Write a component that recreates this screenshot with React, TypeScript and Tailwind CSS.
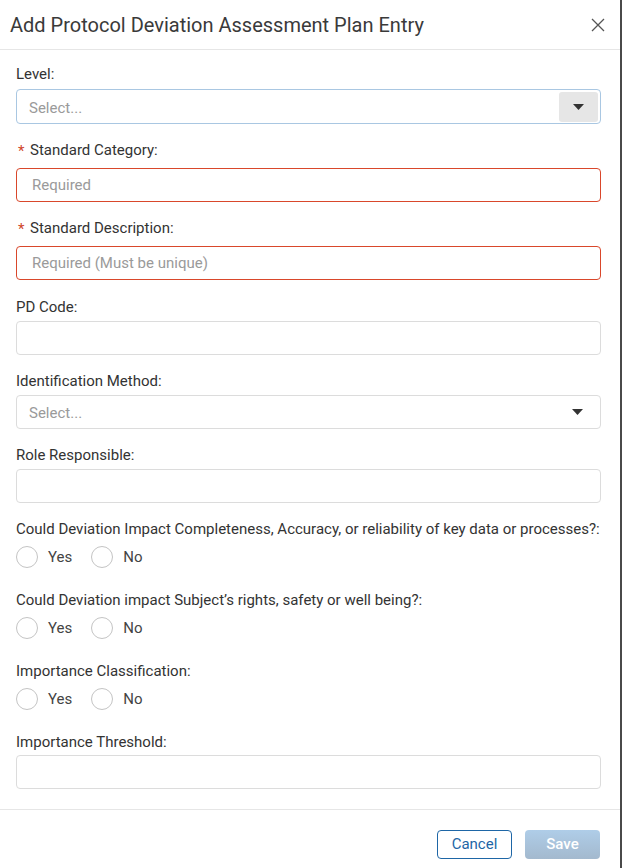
import React from "react";

interface RadioProps {
  name: string;
}

const Caret: React.FC = () => (
  <svg width="11" height="6" viewBox="0 0 11 6" className="block">
    <path d="M0 0 L11 0 L5.5 6 Z" fill="#333" />
  </svg>
);

const Label: React.FC<{ text: string; required?: boolean; className?: string }> = ({ text, required, className }) => (
  <div className={`flex items-center h-5 text-[15px] text-[#333] ${className ?? ""}`}>
    {required && <span className="text-[#d0442a] text-[15px] w-[14px] pl-[2px] leading-none mt-[3px]">*</span>}
    <span>{text}</span>
  </div>
);

const TextInput: React.FC<{ placeholder?: string; error?: boolean; className?: string }> = ({ placeholder, error, className }) => (
  <input
    type="text"
    placeholder={placeholder}
    className={`block w-full h-[34px] rounded-[4px] border bg-white pl-[15px] pr-4 text-[15px] text-[#333] placeholder:text-[#9a9a9a] outline-none ${
      error ? "border-[#d9472b]" : "border-[#dcdcdc]"
    } ${className ?? ""}`}
  />
);

const RadioRow: React.FC<RadioProps> = ({ name }) => (
  <div className="flex items-center h-6 text-[15px] text-[#444]">
    {["Yes", "No"].map((opt) => (
      <label key={opt} className="flex items-center mr-[19px]">
        <span className="w-[22px] h-[22px] rounded-full border border-[#c4c4c4] bg-white" />
        <span className="ml-[10px]">{opt}</span>
        <input type="radio" name={name} className="hidden" />
      </label>
    ))}
  </div>
);

export default function App() {
  return (
    <div className="w-[622px] h-[868px] bg-white border-r-2 border-[#4a4a4a] flex flex-col font-['Roboto',sans-serif]">
      {/* Header */}
      <header className="h-[50px] shrink-0 border-b border-[#e6e6e6] flex items-center justify-between pl-[10px] pr-[14px]">
        <h1 className="text-[20px] text-[#3a3a3a] font-normal">Add Protocol Deviation Assessment Plan Entry</h1>
        <button aria-label="Close" className="w-4 h-4 flex items-center justify-center">
          <svg width="14" height="14" viewBox="0 0 14 14">
            <path d="M1 1 L13 13 M13 1 L1 13" stroke="#555" strokeWidth="1.3" />
          </svg>
        </button>
      </header>

      {/* Body */}
      <section className="flex-1 pl-4 pr-[19px] pt-[14px]">
        <Label text="Level:" />
        <div className="mt-[5px] h-[35px] rounded-[4px] border border-[#a9c7e2] flex items-center justify-between pl-3 pr-[2px]">
          <span className="text-[15px] text-[#9a9a9a] pt-[3px]">Select...</span>
          <span className="w-[39px] h-[30px] rounded-[3px] bg-[#e6e6e6] flex items-center justify-center">
            <Caret />
          </span>
        </div>

        <Label text="Standard Category:" required className="mt-4" />
        <TextInput placeholder="Required" error className="mt-2" />

        <Label text="Standard Description:" required className="mt-4" />
        <TextInput placeholder="Required (Must be unique)" error className="mt-2" />

        <Label text="PD Code:" className="mt-[17px]" />
        <TextInput className="mt-1" />

        <Label text="Identification Method:" className="mt-4" />
        <div className="mt-1 h-[34px] rounded-[4px] border border-[#dcdcdc] flex items-center justify-between pl-3 pr-[17px]">
          <span className="text-[15px] text-[#9a9a9a] pt-[3px]">Select...</span>
          <Caret />
        </div>

        <Label text="Role Responsible:" className="mt-4" />
        <TextInput className="mt-1" />

        <Label
          text="Could Deviation Impact Completeness, Accuracy, or reliability of key data or processes?:"
          className="mt-4"
        />
        <div className="mt-[6px]">
          <RadioRow name="completeness" />
        </div>

        <Label text="Could Deviation impact Subject’s rights, safety or well being?:" className="mt-[21px]" />
        <div className="mt-[6px]">
          <RadioRow name="rights" />
        </div>

        <Label text="Importance Classification:" className="mt-[21px]" />
        <div className="mt-[6px]">
          <RadioRow name="importance" />
        </div>

        <Label text="Importance Threshold:" className="mt-[21px]" />
        <TextInput className="mt-[3px]" />
      </section>

      {/* Footer */}
      <footer className="h-[59px] shrink-0 border-t border-[#e6e6e6] flex items-start justify-end gap-[13px] pr-5 pt-5">
        <button className="w-[75px] h-[29px] rounded-[4px] border border-[#1e66a6] text-[#1e66a6] text-[15px] bg-white">
          Cancel
        </button>
        <button className="w-[75px] h-[29px] rounded-[4px] bg-linear-to-b from-[#afcde8] to-[#a3b9ce] text-white text-[15px] font-medium">
          Save
        </button>
      </footer>
    </div>
  );
}
